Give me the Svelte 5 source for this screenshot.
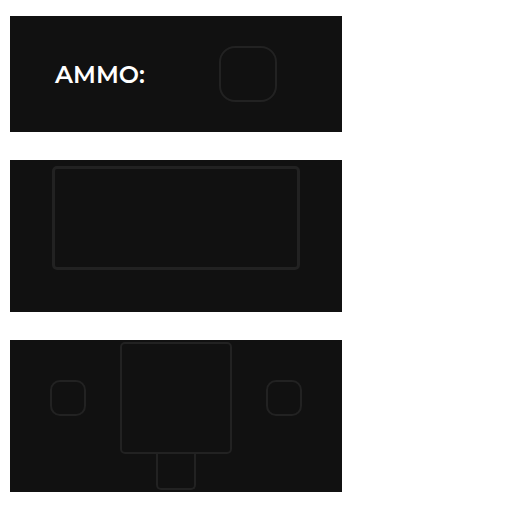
<script>
  const label = 'AMMO:';
</script>

<main>
  <section class="panel ammo">
    <span class="label">{label}</span>
    <div class="box counter"></div>
  </section>

  <section class="panel display">
    <div class="box frame"></div>
  </section>

  <section class="panel weapon">
    <div class="row">
      <div class="box slot"></div>
      <div class="box body"></div>
      <div class="box slot"></div>
    </div>
    <div class="box grip"></div>
  </section>
</main>

<style>
  :global(body) {
    margin: 0;
    background: #fff;
  }

  main {
    display: flex;
    flex-direction: column;
    gap: 28px;
    max-width: 332px;
    padding: 16px 10px;
    font-family: Montserrat, Inter, 'Liberation Sans', sans-serif;
  }

  .panel {
    box-sizing: border-box;
    background: #111;
  }

  .box {
    box-sizing: border-box;
    border: 2px solid #222;
  }

  .ammo {
    display: flex;
    align-items: center;
    justify-content: space-between;
    padding: 30px 65px 30px 45px;
  }

  .label {
    color: #fff;
    font-size: 24px;
    font-weight: 600;
    line-height: 29px;
  }

  .counter {
    width: 58px;
    height: 56px;
    border-radius: 16px;
  }

  .display {
    padding: 6px 42px 42px;
  }

  .frame {
    height: 104px;
    border-width: 3px;
    border-radius: 5px;
  }

  .weapon {
    display: flex;
    flex-direction: column;
    align-items: center;
    padding: 2px 40px;
  }

  .row {
    display: flex;
    align-items: center;
    justify-content: space-between;
    width: 100%;
  }

  .slot {
    width: 36px;
    height: 36px;
    border-radius: 10px;
  }

  .body {
    width: 112px;
    height: 112px;
    border-radius: 5px;
  }

  .grip {
    width: 40px;
    height: 36px;
    border-top: 0;
    border-radius: 0 0 5px 5px;
  }
</style>
